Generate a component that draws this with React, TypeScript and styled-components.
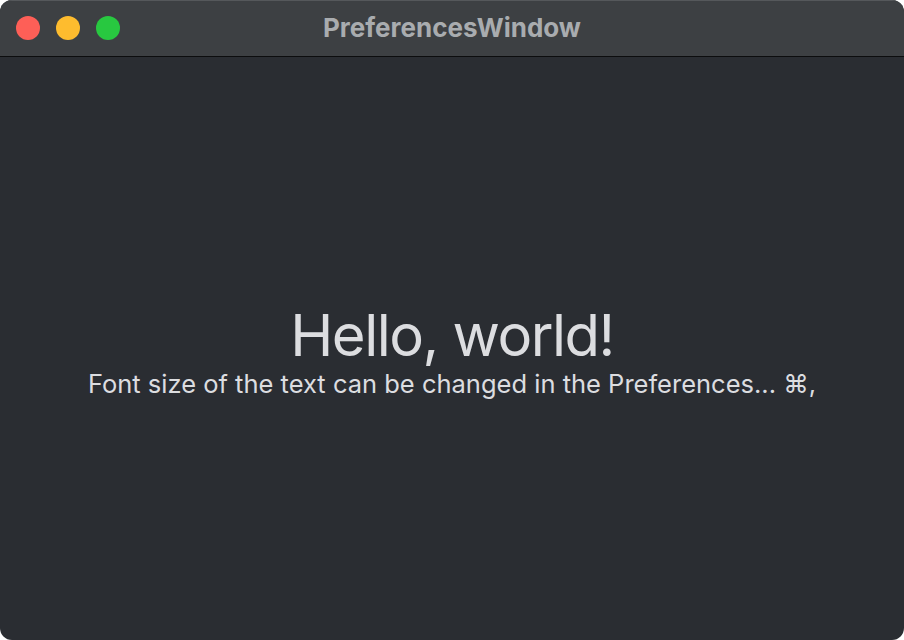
import React from 'react';
import styled, { createGlobalStyle } from 'styled-components';

const Global = createGlobalStyle`
  html, body {
    margin: 0;
    padding: 0;
    background: #ffffff;
  }
  body {
    font-family: Inter, "Noto Sans", sans-serif;
  }
`;

const Window = styled.div`
  width: 904px;
  height: 640px;
  border-radius: 12px;
  overflow: hidden;
  display: flex;
  flex-direction: column;
  background: #2a2d32;
`;

const TitleBar = styled.div`
  flex: none;
  position: relative;
  display: flex;
  align-items: center;
  justify-content: center;
  background: #3d4043;
  border-top: 1px solid #55585b;
  border-bottom: 1px solid #0c0d0e;
  box-sizing: border-box;
  height: 57px;
`;

const Lights = styled.div`
  position: absolute;
  left: 16px;
  top: 15px;
  display: flex;
  gap: 16px;
`;

const Light = styled.span<{ $color: string }>`
  width: 24px;
  height: 24px;
  border-radius: 50%;
  background: ${p => p.$color};
`;

const Title = styled.div`
  font-size: 26px;
  font-weight: 700;
  color: #a9acaf;
  margin-top: -2px;
`;

const Content = styled.div`
  flex: 1;
  display: flex;
  flex-direction: column;
  align-items: center;
  justify-content: center;
  color: #dcdde0;
  padding-top: 6px;
`;

const Heading = styled.div`
  font-size: 58px;
  line-height: 64px;
  letter-spacing: -1.5px;
`;

const Subtitle = styled.div`
  font-size: 25.5px;
  line-height: 32px;
  margin-top: 1px;
`;

export default function App(): React.ReactElement {
  return (
    <>
      <Global />
      <Window>
        <TitleBar>
          <Lights>
            <Light $color="#fe5f57" />
            <Light $color="#febc2e" />
            <Light $color="#28c840" />
          </Lights>
          <Title>PreferencesWindow</Title>
        </TitleBar>
        <Content>
          <Heading>Hello, world!</Heading>
          <Subtitle>Font size of the text can be changed in the Preferences... ⌘,</Subtitle>
        </Content>
      </Window>
    </>
  );
}
